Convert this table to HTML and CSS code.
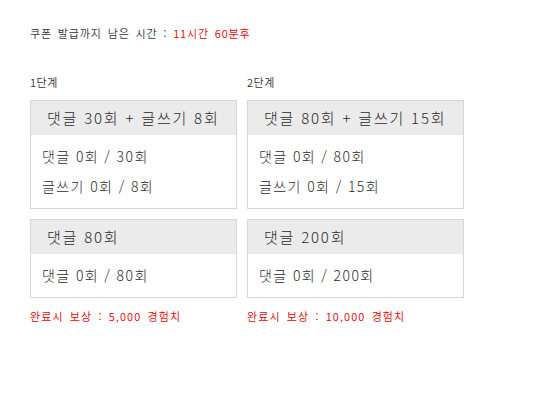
FILE: index.html
```html
<!DOCTYPE html>
<html lang="ko">
<head>
<meta charset="utf-8">
<link rel="stylesheet" href="styles.css">
</head>
<body>
<div class="page">
  <p class="timer">쿠폰 발급까지 남은 시간 : <span class="red">11시간 60분후</span></p>
  <div class="stages">
    <div class="stage stage-1">
      <div class="stage-title">1단계</div>
      <div class="card">
        <div class="card-head">댓글 30회 + 글쓰기 8회</div>
        <div class="card-body">
          <div class="row">댓글 0회 / 30회</div>
          <div class="row">글쓰기 0회 / 8회</div>
        </div>
      </div>
      <div class="card">
        <div class="card-head">댓글 80회</div>
        <div class="card-body">
          <div class="row">댓글 0회 / 80회</div>
        </div>
      </div>
      <div class="reward">완료시 보상 : 5,000 경험치</div>
    </div>
    <div class="stage stage-2">
      <div class="stage-title">2단계</div>
      <div class="card">
        <div class="card-head">댓글 80회 + 글쓰기 15회</div>
        <div class="card-body">
          <div class="row">댓글 0회 / 80회</div>
          <div class="row">글쓰기 0회 / 15회</div>
        </div>
      </div>
      <div class="card">
        <div class="card-head">댓글 200회</div>
        <div class="card-body">
          <div class="row">댓글 0회 / 200회</div>
        </div>
      </div>
      <div class="reward">완료시 보상 : 10,000 경험치</div>
    </div>
  </div>
</div>
</body>
</html>
```
FILE: styles.css
```css
html, body {
  margin: 0;
  padding: 0;
  background: #fff;
}
body {
  font-family: "Noto Sans CJK KR", "Noto Sans", sans-serif;
  font-weight: 300;
  color: #2a2a2a;
}
.page {
  padding: 25px 30px;
}
.timer {
  margin: 0;
  font-size: 11px;
  font-weight: 350;
  line-height: 16px;
  letter-spacing: 0.85px;
  word-spacing: 2px;
  color: #333;
}
.red {
  color: #e60000;
}
.stages {
  display: flex;
  gap: 10px;
  margin-top: 33px;
}
.stage-1 { width: 207px; }
.stage-2 { width: 217px; }
.stage-title {
  font-size: 11px;
  font-weight: 350;
  line-height: 16px;
  letter-spacing: 0.5px;
  margin-bottom: 10px;
  color: #333;
}
.card {
  border: 1px solid #d6d6d6;
  margin-bottom: 10px;
}
.card-head {
  background: #ebebeb;
  height: 34px;
  line-height: 33px;
  padding-left: 16px;
  font-size: 15px;
  letter-spacing: 1.8px;
}
.card-body {
  padding: 6px 11px 7px;
}
.row {
  font-size: 14px;
  line-height: 30px;
  letter-spacing: 1.4px;
}
.reward {
  font-size: 11px;
  font-weight: 350;
  line-height: 16px;
  color: #e60000;
  letter-spacing: 1.1px;
  word-spacing: 2px;
}
```
